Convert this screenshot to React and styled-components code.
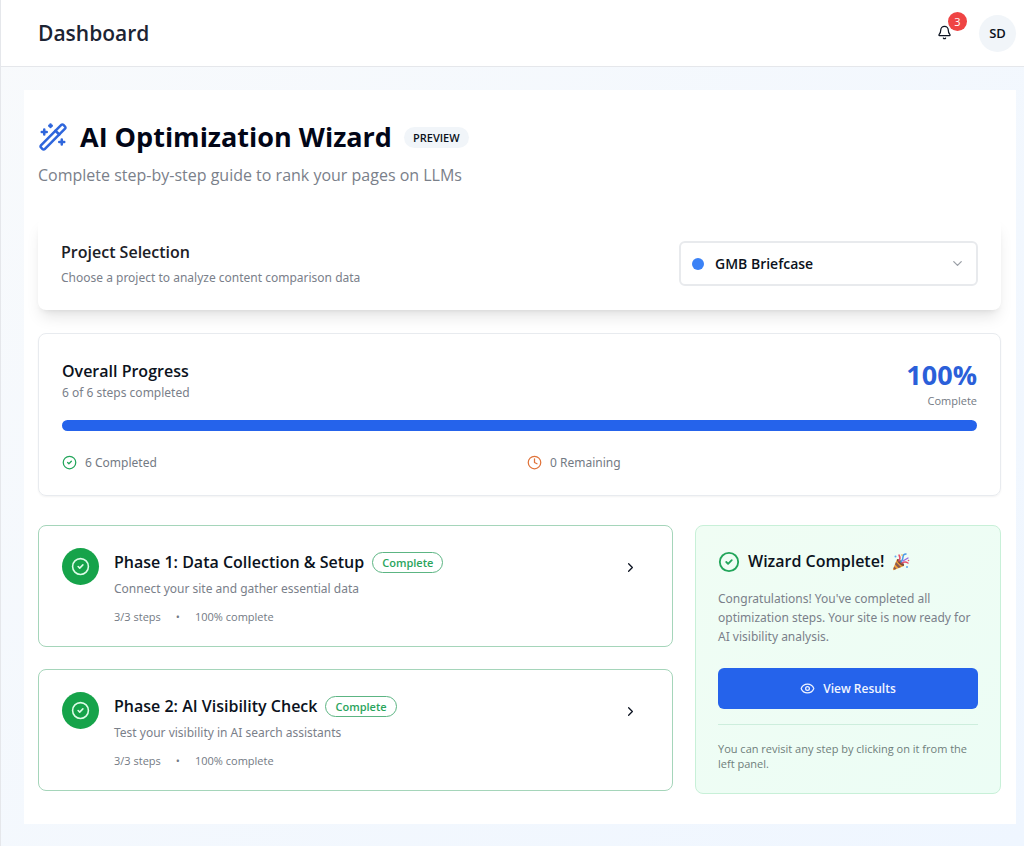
import React, { useState } from "react";
import styled, { createGlobalStyle } from "styled-components";
import { Bell, ChevronDown, ChevronRight, CircleCheck, Clock, Eye } from "lucide-react";

const phases = [
  {
    title: "Phase 1: Data Collection & Setup",
    description: "Connect your site and gather essential data",
    done: 3,
    total: 3,
  },
  {
    title: "Phase 2: AI Visibility Check",
    description: "Test your visibility in AI search assistants",
    done: 3,
    total: 3,
  },
];

const WandIcon = () => (
  <svg width="30" height="30" viewBox="0 0 24 24" fill="none" stroke="#2f66dc" strokeWidth="2" strokeLinecap="round" strokeLinejoin="round" aria-hidden="true">
    <path d="m21.64 3.64-1.28-1.28a1.21 1.21 0 0 0-1.72 0L2.36 18.64a1.21 1.21 0 0 0 0 1.72l1.28 1.28a1.2 1.2 0 0 0 1.72 0L21.64 5.36a1.2 1.2 0 0 0 0-1.72" />
    <path d="m14 7 3 3" />
    <path d="M5 6v4M19 14v4M10 2v2M7 8H3M21 16h-4M11 3H9" />
  </svg>
);

const PartyIcon = () => (
  <svg width="18" height="18" viewBox="0 0 18 18" role="img" aria-label="Party popper">
    <path d="M5 6 12 13 2 17Q.5 17.500 1 16Z" fill="#f2a33a" />
    <path d="M4 9 9 14 6.500 15 3 11.500ZM2.300 13.500 4.500 15.800 2.500 16.700 1.400 15.600Z" fill="#8a5a55" />
    <ellipse cx="8.500" cy="9.500" rx="1.600" ry="4.700" transform="rotate(-45 8.500 9.500)" fill="#7b4b3a" />
    <path d="M7 8Q9 5 7 2M10 10Q13 8 16 10" fill="none" stroke="#e8506d" strokeWidth="1.500" strokeLinecap="round" />
    <path d="M9 9Q11 7 11 4T14 1" fill="none" stroke="#4a9ae8" strokeWidth="1.500" strokeLinecap="round" />
    <path d="m11 8 5-3" fill="none" stroke="#9b6be0" strokeWidth="1.400" strokeLinecap="round" />
    <circle cx="3.500" cy="3.500" r="1" fill="#5aa8ee" />
    <circle cx="10" cy="2" r=".8" fill="#f3b23d" />
    <circle cx="16.500" cy="7.500" r=".8" fill="#e8506d" />
    <circle cx="15" cy="14" r="1" fill="#5aa8ee" />
  </svg>
);

const PhaseCard = ({ phase }) => (
  <PhaseButton type="button">
    <PhaseStatus>
      <CircleCheck size={19} />
    </PhaseStatus>
    <PhaseBody>
      <PhaseHeading>
        <CardTitle>{phase.title}</CardTitle>
        <CompleteBadge>Complete</CompleteBadge>
      </PhaseHeading>
      <Muted>{phase.description}</Muted>
      <PhaseMeta>
        <span>
          {phase.done}/{phase.total} steps
        </span>
        <span>•</span>
        <span>{Math.round((phase.done / phase.total) * 100)}% complete</span>
      </PhaseMeta>
    </PhaseBody>
    <Chevron size={15} />
  </PhaseButton>
);

const App = () => {
  const [project, setProject] = useState("gmb");
  const total = phases.reduce((sum, x) => sum + x.total, 0);
  const done = phases.reduce((sum, x) => sum + x.done, 0);
  const percent = Math.round((done / total) * 100);

  return (
    <Page>
      <GlobalStyle />
      <Header>
        <HeaderTitle>Dashboard</HeaderTitle>
        <HeaderActions>
          <BellButton type="button" aria-label="Notifications">
            <Bell size={15} />
            <BellCount>3</BellCount>
          </BellButton>
          <Avatar type="button">SD</Avatar>
        </HeaderActions>
      </Header>
      <Main>
        <Intro>
          <IntroHeading>
            <WandIcon />
            <IntroTitle>AI Optimization Wizard</IntroTitle>
            <PreviewBadge>PREVIEW</PreviewBadge>
          </IntroHeading>
          <Subtitle>Complete step-by-step guide to rank your pages on LLMs</Subtitle>
        </Intro>

        <ProjectCard>
          <ProjectText>
            <ProjectLabel htmlFor="project">Project Selection</ProjectLabel>
            <Muted>Choose a project to analyze content comparison data</Muted>
          </ProjectText>
          <SelectWrap>
            <Dot />
            <Select id="project" value={project} onChange={(e) => setProject(e.target.value)}>
              <option value="gmb">GMB Briefcase</option>
            </Select>
            <SelectArrow size={15} />
          </SelectWrap>
        </ProjectCard>

        <ProgressCard>
          <ProgressTop>
            <ProgressText>
              <CardTitle>Overall Progress</CardTitle>
              <Muted>
                {done} of {total} steps completed
              </Muted>
            </ProgressText>
            <ProgressValue>
              <strong>{percent}%</strong>
              <Small>Complete</Small>
            </ProgressValue>
          </ProgressTop>
          <Track role="progressbar" aria-label="Overall Progress" aria-valuenow={percent}>
            <Fill style={{ width: `${percent}%` }} />
          </Track>
          <Stats>
            <Stat $color="#22a55a">
              <CircleCheck size={15} />
              {done} Completed
            </Stat>
            <Stat $color="#e0733a">
              <Clock size={15} />
              {total - done} Remaining
            </Stat>
          </Stats>
        </ProgressCard>

        <Columns>
          <PhaseList>
            {phases.map((x, idx) => (
              <PhaseCard key={idx} phase={x} />
            ))}
          </PhaseList>
          <DoneCard>
            <DoneHeading>
              <CircleCheck size={22} />
              <CardTitle>Wizard Complete!</CardTitle>
              <PartyIcon />
            </DoneHeading>
            <Muted>
              Congratulations! You've completed all optimization steps. Your site is now ready for AI visibility analysis.
            </Muted>
            <ResultsButton type="button">
              <Eye size={15} />
              View Results
            </ResultsButton>
            <DoneNote>You can revisit any step by clicking on it from the left panel.</DoneNote>
          </DoneCard>
        </Columns>
      </Main>
    </Page>
  );
};

export default App;

const GlobalStyle = createGlobalStyle`
  *, *::before, *::after {
    box-sizing: border-box;
  }

  body {
    margin: 0;
    color: #0b1220;
    font-family: "Segoe UI", "Open Sans", "Noto Sans", sans-serif;
    font-size: 13px;
    line-height: 19px;
  }

  h1, h2, p {
    margin: 0;
  }

  button, select {
    font: inherit;
    color: inherit;
    cursor: pointer;
  }

  svg {
    display: block;
    flex-shrink: 0;
  }
`;

const Page = styled.div`
  min-height: 100vh;
  border-left: 1px solid #e5e7eb;
  background: linear-gradient(135deg, #f8fafc 0%, #eff6ff 100%);
`;

const Header = styled.header`
  display: flex;
  align-items: center;
  justify-content: space-between;
  padding: 14px 8px 14px 37px;
  background: #fff;
  border-bottom: 1px solid #e5e7eb;
`;

const HeaderTitle = styled.h2`
  font-size: 21px;
  line-height: 38px;
  font-weight: 600;
  color: #1c2433;
`;

const HeaderActions = styled.div`
  display: flex;
  align-items: center;
  gap: 16px;
`;

const BellButton = styled.button`
  position: relative;
  display: grid;
  place-items: center;
  width: 38px;
  height: 38px;
  padding: 0 0 2px;
  border: 0;
  background: none;
`;

const BellCount = styled.span`
  position: absolute;
  top: -2px;
  right: -4px;
  width: 19px;
  height: 19px;
  border-radius: 50%;
  background: #ef4444;
  color: #fff;
  font-size: 11px;
  line-height: 19px;
`;

const Avatar = styled.button`
  width: 37px;
  height: 37px;
  padding: 0;
  border: 0;
  border-radius: 50%;
  background: #f1f5f9;
  font-size: 13px;
  font-weight: 600;
`;

const Main = styled.main`
  margin: 23px 8px 22px 23px;
  padding: 28px 15px 30px 14px;
  background: #fff;
`;

const Intro = styled.div`
  display: flex;
  flex-direction: column;
  gap: 6px;
  margin-bottom: 30px;
`;

const IntroHeading = styled.div`
  display: flex;
  align-items: center;
  gap: 12px;
`;

const IntroTitle = styled.h1`
  font-size: 27px;
  line-height: 38px;
  font-weight: 700;
  color: #020617;
`;

const PreviewBadge = styled.span`
  padding: 0 9px;
  border-radius: 12px;
  background: #f1f5f9;
  font-size: 11px;
  line-height: 21px;
  font-weight: 600;
`;

const Subtitle = styled.p`
  font-size: 16px;
  line-height: 26px;
  color: #7a808a;
`;

const Muted = styled.p`
  font-family: "Segoe UI", "Noto Sans", sans-serif;
  font-size: 12px;
  line-height: 19px;
  color: #7a808a;
`;

const Small = styled.span`
  font-size: 11px;
  line-height: 15px;
  color: #737a84;
`;

const CardTitle = styled.h2`
  font-size: 16px;
  line-height: 23px;
  font-weight: 600;
`;

const ProjectCard = styled.section`
  display: flex;
  align-items: center;
  justify-content: space-between;
  gap: 24px;
  padding: 22px 23px 23px;
  border-radius: 8px;
  background: #fff;
  box-shadow: 0 10px 15px -3px rgb(0 0 0 / 0.1), 0 4px 6px -4px rgb(0 0 0 / 0.1);
`;

const ProjectText = styled.div`
  display: flex;
  flex-direction: column;
  gap: 6px;
  padding-top: 2px;
`;

const ProjectLabel = styled.label`
  font-size: 16px;
  line-height: 20px;
  font-weight: 600;
  color: #1c2026;
`;

const SelectWrap = styled.div`
  display: grid;
  grid-template-columns: 35px 1fr 33px;
  align-items: center;
  width: 299px;
`;

const Dot = styled.span`
  grid-area: 1 / 1;
  z-index: 1;
  width: 12px;
  height: 12px;
  margin-left: 13px;
  border-radius: 50%;
  background: #3b82f6;
  pointer-events: none;
`;

const Select = styled.select`
  grid-area: 1 / 1 / 2 / 4;
  height: 45px;
  padding: 0 34px;
  border: 2px solid #e8eaed;
  border-radius: 6px;
  background: #fff;
  appearance: none;
  font-size: 14px;
  font-weight: 600;
`;

const SelectArrow = styled(ChevronDown)`
  grid-area: 1 / 3;
  z-index: 1;
  margin-left: 5px;
  color: #9a9fa6;
  pointer-events: none;
`;

const ProgressCard = styled.section`
  margin-top: 23px;
  padding: 22px 23px 23px;
  border: 1px solid #e8ebef;
  border-radius: 8px;
  box-shadow: 0 1px 2px rgb(0 0 0 / 0.05);
`;

const ProgressTop = styled.div`
  display: flex;
  justify-content: space-between;
  margin-bottom: 12px;
`;

const ProgressText = styled.div`
  padding-top: 4px;
`;

const ProgressValue = styled.div`
  display: flex;
  flex-direction: column;
  align-items: flex-end;

  strong {
    font-size: 27px;
    line-height: 37px;
    font-weight: 700;
    color: #2b5fd9;
  }
`;

const Track = styled.div`
  height: 11px;
  border-radius: 6px;
  background: #e2e8f0;
  overflow: hidden;
`;

const Fill = styled.div`
  height: 100%;
  background: #2563eb;
`;

const Stats = styled.div`
  display: grid;
  grid-template-columns: 1fr 1fr;
  gap: 15px;
  margin-top: 22px;
`;

const Stat = styled.div`
  display: flex;
  align-items: center;
  gap: 8px;
  font-family: "Segoe UI", "Noto Sans", sans-serif;
  font-size: 12px;
  color: #737a84;

  svg {
    color: ${(props) => props.$color};
  }
`;

const Columns = styled.div`
  display: grid;
  grid-template-columns: minmax(0, 635fr) minmax(0, 306fr);
  align-items: start;
  gap: 22px;
  margin-top: 29px;
`;

const PhaseList = styled.div`
  display: flex;
  flex-direction: column;
  gap: 22px;
`;

const PhaseButton = styled.button`
  display: flex;
  align-items: flex-start;
  gap: 15px;
  width: 100%;
  padding: 22px 34px 22px 23px;
  border: 1px solid #a5d5ba;
  border-radius: 8px;
  background: #fff;
  text-align: left;
`;

const PhaseStatus = styled.span`
  display: grid;
  place-items: center;
  flex-shrink: 0;
  width: 37px;
  height: 37px;
  border-radius: 50%;
  background: #16a34a;
  color: #dcfce7;
`;

const PhaseBody = styled.div`
  flex: 1;
  padding-top: 3px;
`;

const PhaseHeading = styled.div`
  display: flex;
  align-items: center;
  gap: 8px;
  margin-bottom: 5px;
`;

const CompleteBadge = styled.span`
  padding: 0 9px;
  border: 1px solid #5cb583;
  border-radius: 12px;
  color: #2aa45c;
  font-size: 11px;
  line-height: 19px;
  font-weight: 600;
`;

const PhaseMeta = styled.div`
  display: flex;
  gap: 15px;
  margin-top: 11px;
  font-size: 11px;
  line-height: 15px;
  color: #737a84;
`;

const Chevron = styled(ChevronRight)`
  margin-top: 12px;
`;

const DoneCard = styled.aside`
  display: flex;
  flex-direction: column;
  padding: 24px 22px 22px;
  border: 1px solid #c8f0d8;
  border-radius: 8px;
  background: linear-gradient(135deg, #f0fdf4, #ecfdf5);
`;

const DoneHeading = styled.div`
  display: flex;
  align-items: center;
  gap: 8px;
  margin-bottom: 16px;

  > svg:first-child {
    color: #22a55a;
  }
`;

const ResultsButton = styled.button`
  display: flex;
  align-items: center;
  justify-content: center;
  gap: 8px;
  height: 41px;
  margin: 22px 0 15px;
  border: 0;
  border-radius: 6px;
  background: #2563eb;
  color: #f1f5ff;
  font-size: 12px;
  font-weight: 600;
`;

const DoneNote = styled.p`
  padding-top: 16px;
  border-top: 1px solid #cdeedd;
  font-size: 11px;
  line-height: 15px;
  color: #6f7d7b;
`;
